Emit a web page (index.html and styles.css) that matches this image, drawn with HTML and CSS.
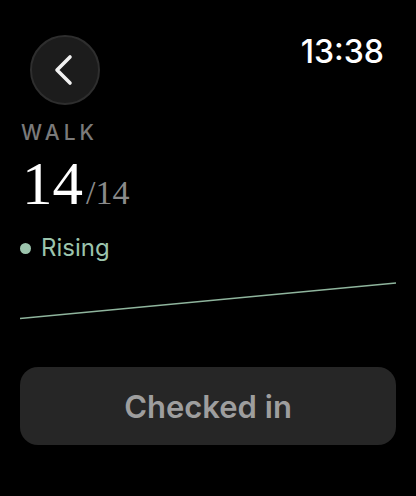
FILE: index.html
```html
<!DOCTYPE html>
<html lang="en">
<head>
    <meta charset="UTF-8">
    <meta name="viewport" content="width=device-width, initial-scale=1.0">
    <title>Walk</title>
    <link rel="stylesheet" href="styles.css">
</head>
<body>

    <div class="screen">
        <header class="top-bar">
            <button class="back-button" type="button" aria-label="Back">
                <svg width="24" height="34" viewBox="0 0 24 34">
                    <path d="M19 4 L6 17 L19 30" fill="none" stroke="#f2f2f2" stroke-width="3.6" stroke-linecap="round" stroke-linejoin="round"/>
                </svg>
            </button>
            <span class="clock">13:38</span>
        </header>

        <p class="label">WALK</p>

        <p class="count">14<span class="count-total">/14</span></p>

        <p class="trend"><span class="trend-dot"></span>Rising</p>

        <!-- trend line -->
        <svg class="trend-line" width="376" height="38" viewBox="0 0 376 38">
            <line x1="0" y1="36.5" x2="376" y2="1" stroke="#8fb59d" stroke-width="1.6"/>
        </svg>

        <button class="check-button" type="button" disabled>Checked in</button>
    </div>

</body>
</html>
```

FILE: styles.css
```css
body {
    margin: 0;
    background-color: #000;
    font-family: Inter, "Noto Sans", sans-serif;
    color: #fff;
}

.screen {
    width: 416px;
    height: 496px;
    box-sizing: border-box;
    padding: 0 20px;
    display: flex;
    flex-direction: column;
}

.top-bar {
    display: flex;
    justify-content: space-between;
    align-items: flex-start;
}

.back-button {
    width: 70px;
    height: 70px;
    margin: 35px 0 0 10px;
    padding: 0;
    border-radius: 50%;
    border: 2px solid #2e2e2e;
    background-color: #1c1c1c;
    display: flex;
    align-items: center;
    justify-content: center;
    box-sizing: border-box;
    cursor: pointer;
}

.back-button svg {
    margin-left: -4px;
}

.clock {
    margin: 36px 12px 0 0;
    font-size: 32px;
    line-height: 1;
    font-weight: 500;
    color: #fff;
}

.label {
    margin: 17px 0 0 1px;
    font-size: 21px;
    line-height: 1;
    font-weight: 500;
    letter-spacing: 4px;
    color: #7a7a7a;
}

.count {
    margin: 10px 0 0 2px;
    font-family: "Liberation Serif", serif;
    font-size: 61px;
    line-height: 1;
    color: #fff;
}

.count-total {
    font-size: 34px;
    color: #8a8a8a;
    margin-left: 3px;
}

.trend {
    margin: 22px 0 0 0;
    display: flex;
    align-items: center;
    font-size: 24px;
    line-height: 1;
    color: #9cc4ad;
}

.trend-dot {
    width: 11px;
    height: 11px;
    border-radius: 50%;
    background-color: #9cc4ad;
    margin-right: 10px;
}

.trend-line {
    display: block;
    margin-top: 22px;
}

.check-button {
    margin-top: 47px;
    height: 78px;
    width: 100%;
    border: none;
    border-radius: 18px;
    background-color: #262626;
    color: #9e9e9e;
    font-family: Inter, "Noto Sans", sans-serif;
    font-size: 31px;
    font-weight: 600;
}
```
